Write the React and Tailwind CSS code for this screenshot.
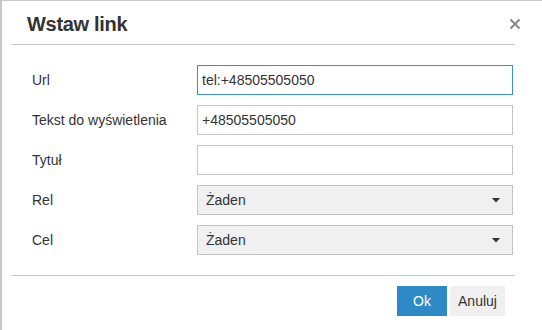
import React from "react";

const font = { fontFamily: '"Liberation Sans", Arial, sans-serif' };

function Caret() {
  return (
    <svg width="8" height="5" viewBox="0 0 8 5" className="ml-auto">
      <path d="M0 0 L8 0 L4 4.5 Z" fill="#333" />
    </svg>
  );
}

function Row({ label, children }) {
  return (
    <div className="flex items-center h-[30px]">
      <div className="w-[185px] pl-[20px] text-[14px] text-[#333]">{label}</div>
      <div className="w-[316px]">{children}</div>
    </div>
  );
}

function Input({ value, focused }) {
  return (
    <div
      className={
        "h-[30px] w-full bg-white border flex items-center px-[4px] text-[14px] text-[#333] " +
        (focused ? "border-[#3a8fd5]" : "border-[#c5c5c5]")
      }
    >
      {value}
    </div>
  );
}

function Select({ value }) {
  return (
    <div className="h-[30px] w-full bg-[#f0f0f0] border border-[#c5c5c5] flex items-center pl-[8px] pr-[12px] text-[14px] text-[#333]">
      <span>{value}</span>
      <Caret />
    </div>
  );
}

export default function App() {
  return (
    <div style={font} className="w-[542px] h-[330px] bg-white border-l-2 border-t border-[#c8c8c8] overflow-hidden">
      <div className="ml-[10px] w-[503px]">
        <div className="h-[44px] flex items-center justify-between border-b border-[#c5c5c5]">
          <div className="pl-[15px] pt-[2px] text-[20px] leading-[20px] font-bold text-[#333] tracking-[-0.3px]">Wstaw link</div>
          <svg width="12" height="12" viewBox="0 0 12 12" className="mr-[-6px] mt-[2px]">
            <path d="M1.5 1.5 L10.5 10.5 M10.5 1.5 L1.5 10.5" stroke="#888" strokeWidth="2" />
          </svg>
        </div>
        <div className="pt-[20px] pb-[20px] flex flex-col gap-[10px] border-b border-[#c5c5c5]">
          <Row label="Url"><Input value="tel:+48505505050" focused /></Row>
          <Row label="Tekst do wyświetlenia"><Input value="+48505505050" /></Row>
          <Row label="Tytuł"><Input value="" /></Row>
          <Row label="Rel"><Select value="Żaden" /></Row>
          <Row label="Cel"><Select value="Żaden" /></Row>
        </div>
        <div className="flex justify-end gap-[3px] pt-[10px] pr-[10px]">
          <div className="h-[30px] w-[50px] bg-[#2d8ac7] text-white text-[14px] flex items-center justify-center">Ok</div>
          <div className="h-[30px] w-[55px] bg-[#f0f0f0] text-[#333] text-[14px] flex items-center justify-center">Anuluj</div>
        </div>
      </div>
    </div>
  );
}
